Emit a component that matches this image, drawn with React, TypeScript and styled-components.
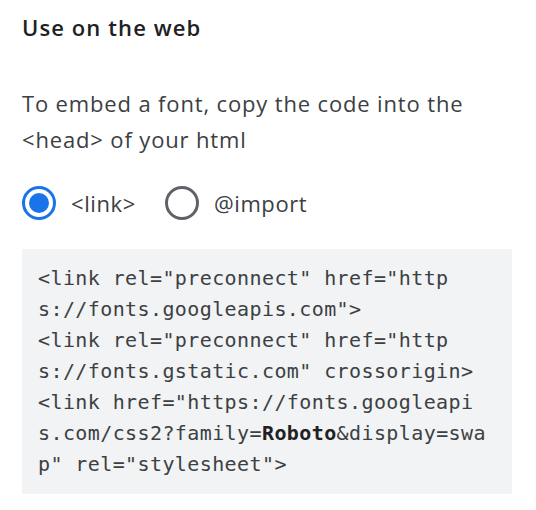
import styled, { createGlobalStyle } from "styled-components"

const GlobalStyle = createGlobalStyle`
  body {
    margin: 0;
    background: #ffffff;
    font-family: "Open Sans", "Noto Sans", sans-serif;
  }
`

const Panel = styled.div`
  padding: 12px 24px 0 22px;
  width: 536px;
  box-sizing: border-box;
`

const Heading = styled.h2`
  margin: 0;
  font-size: 22px;
  line-height: 30px;
  font-weight: 600;
  letter-spacing: 1.1px;
  color: #202124;
`

const Intro = styled.p`
  margin: 43px 0 0;
  font-size: 22px;
  line-height: 36px;
  letter-spacing: 0.85px;
  color: #3c4043;
`

const RadioGroup = styled.div`
  display: flex;
  align-items: center;
  gap: 29px;
  margin-top: 29px;
`

const RadioOption = styled.label`
  display: flex;
  align-items: center;
  gap: 15px;
  font-size: 22px;
  line-height: 34px;
  letter-spacing: 0.6px;
  color: #3c4043;
  cursor: pointer;
`

const RadioCircle = styled.span<{ $checked?: boolean }>`
  width: 34px;
  height: 34px;
  box-sizing: border-box;
  border-radius: 50%;
  border: 3px solid ${(p) => (p.$checked ? "#1a73e8" : "#5f6368")};
  display: flex;
  align-items: center;
  justify-content: center;

  &::after {
    content: "";
    width: 20px;
    height: 20px;
    border-radius: 50%;
    background: #1a73e8;
    display: ${(p) => (p.$checked ? "block" : "none")};
  }
`

const CodeBox = styled.pre`
  margin: 29px 0 0;
  width: 490px;
  box-sizing: border-box;
  padding: 14px 16px 14px;
  background: #f1f3f4;
  font-family: "DejaVu Sans Mono", "Liberation Mono", monospace;
  font-size: 20px;
  letter-spacing: 0.4px;
  line-height: 31px;
  color: #3c4043;
  white-space: pre-wrap;
  word-break: break-all;
`

const Family = styled.b`
  font-weight: 700;
  color: #202124;
`

export default function App() {
  return (
    <>
      <GlobalStyle />
      <Panel>
        <Heading>Use on the web</Heading>
        <Intro>To embed a font, copy the code into the &lt;head&gt; of your html</Intro>
        <RadioGroup>
          <RadioOption>
            <RadioCircle $checked />
            &lt;link&gt;
          </RadioOption>
          <RadioOption>
            <RadioCircle />
            @import
          </RadioOption>
        </RadioGroup>
        <CodeBox>
          {'<link rel="preconnect" href="https://fonts.googleapis.com">\n<link rel="preconnect" href="https://fonts.gstatic.com" crossorigin>\n<link href="https://fonts.googleapis.com/css2?family='}
          <Family>Roboto</Family>
          {'&display=swap" rel="stylesheet">'}
        </CodeBox>
      </Panel>
    </>
  )
}
